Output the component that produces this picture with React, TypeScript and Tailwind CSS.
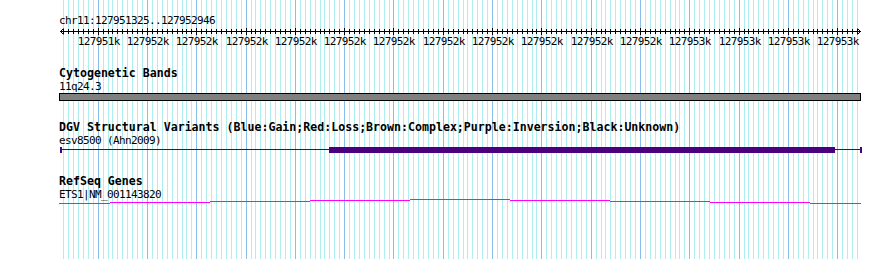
const MAJOR0 = 97.7
const STEP = 4.93

const minors: number[] = []
for (let j = -8; j <= 154; j++) {
  const x = Math.round(MAJOR0 + STEP * j)
  if (x >= 59 && x <= 858) minors.push(x)
}
const majors = Array.from({ length: 16 }, (_, i) => Math.round(MAJOR0 + STEP * 10 * i))

const rulerLabels = [
  "127951k",
  "127952k",
  "127952k",
  "127952k",
  "127952k",
  "127952k",
  "127952k",
  "127952k",
  "127952k",
  "127952k",
  "127952k",
  "127952k",
  "127953k",
  "127953k",
  "127953k",
  "127953k",
]

// pink gene line steps up then back down
const geneSteps = [
  [59, 110, 203],
  [110, 210, 202],
  [210, 310, 201],
  [310, 410, 200],
  [410, 510, 199],
  [510, 610, 200],
  [610, 710, 201],
  [710, 810, 202],
  [810, 861, 203],
]

function GridLayer() {
  return (
    <svg className="absolute inset-0" width={890} height={259}>
      {minors.map((x, i) => (
        <rect key={"m" + i} x={x} y={0} width={1} height={259} fill="#aeeeee" />
      ))}
      {majors.map((x, i) => (
        <rect key={"M" + i} x={x} y={0} width={1} height={259} fill="#87bfea" />
      ))}
    </svg>
  )
}

function Ruler() {
  return (
    <svg width={890} height={20} className="block overflow-visible">
      <rect x={60} y={4} width={801} height={1} fill="#000" />
      {minors.map((x, i) => (
        <rect key={i} x={x} y={2} width={1} height={5} fill="#000" />
      ))}
      {majors.map((x, i) => (
        <rect key={"t" + i} x={x} y={1} width={1} height={7} fill="#000" />
      ))}
      <path d="M60.5 4.5 L63.5 1.5 M60.5 4.5 L63.5 7.5" stroke="#000" strokeWidth={1} fill="none" />
      <path d="M860.5 4.5 L857.5 1.5 M860.5 4.5 L857.5 7.5" stroke="#000" strokeWidth={1} fill="none" />
      {majors.map((x, i) => (
        <text
          key={"l" + i}
          x={x + 0.8}
          y={18}
          textAnchor="middle"
          fontSize={11}
          letterSpacing={-0.62}
          fontFamily="'DejaVu Sans Mono', monospace"
          fill="#000"
        >
          {rulerLabels[i]}
        </text>
      ))}
    </svg>
  )
}

function TrackHead({ title, label, labelClass = "h-[13px]" }: { title: string; label: string; labelClass?: string }) {
  return (
    <div className="pl-[59px]">
      <div className="h-[13px] text-[11.6px] leading-[13px] font-bold whitespace-nowrap">{title}</div>
      <div className={`${labelClass} text-[11px] tracking-[-0.62px] leading-[13px] whitespace-nowrap`}>{label}</div>
    </div>
  )
}

export default function App() {
  return (
    <div className="relative w-[890px] h-[259px] overflow-hidden bg-white text-black font-['DejaVu_Sans_Mono',monospace]">
      <GridLayer />
      <div className="relative flex flex-col">
        <div className="mt-[14px] h-[13px] pl-[59px] text-[11px] tracking-[-0.62px] leading-[13px]">
          chr11:127951325..127952946
        </div>

        <Ruler />

        <div className="mt-[20px]">
          <TrackHead title="Cytogenetic Bands" label="11q24.3" />
          <svg width={890} height={8} className="block">
            <rect x={59.5} y={0.5} width={801} height={7} fill="#808080" stroke="#000" strokeWidth={1} />
          </svg>
        </div>

        <div className="mt-[20px]">
          <TrackHead
            title="DGV Structural Variants (Blue:Gain;Red:Loss;Brown:Complex;Purple:Inversion;Black:Unknown)"
            label="esv8500 (Ahn2009)"
          />
          <svg width={890} height={7} className="block">
            <rect x={60} y={2} width={801} height={1} fill="#4b0082" />
            <rect x={60} y={0} width={2} height={6} fill="#4b0082" />
            <rect x={860} y={0} width={2} height={6} fill="#4b0082" />
            <rect x={329} y={0} width={506} height={6} fill="#4b0082" />
          </svg>
        </div>

        <div className="mt-[21px]">
          <TrackHead title="RefSeq Genes" label="ETS1|NM_001143820" labelClass="h-[11px]" />
          <svg width={890} height={6} className="block">
            {geneSteps.map(([a, b, y], i) => (
              <rect key={i} x={a} y={y - 199} width={b - a} height={1} fill="#ff00ff" />
            ))}
          </svg>
        </div>
      </div>
    </div>
  )
}
